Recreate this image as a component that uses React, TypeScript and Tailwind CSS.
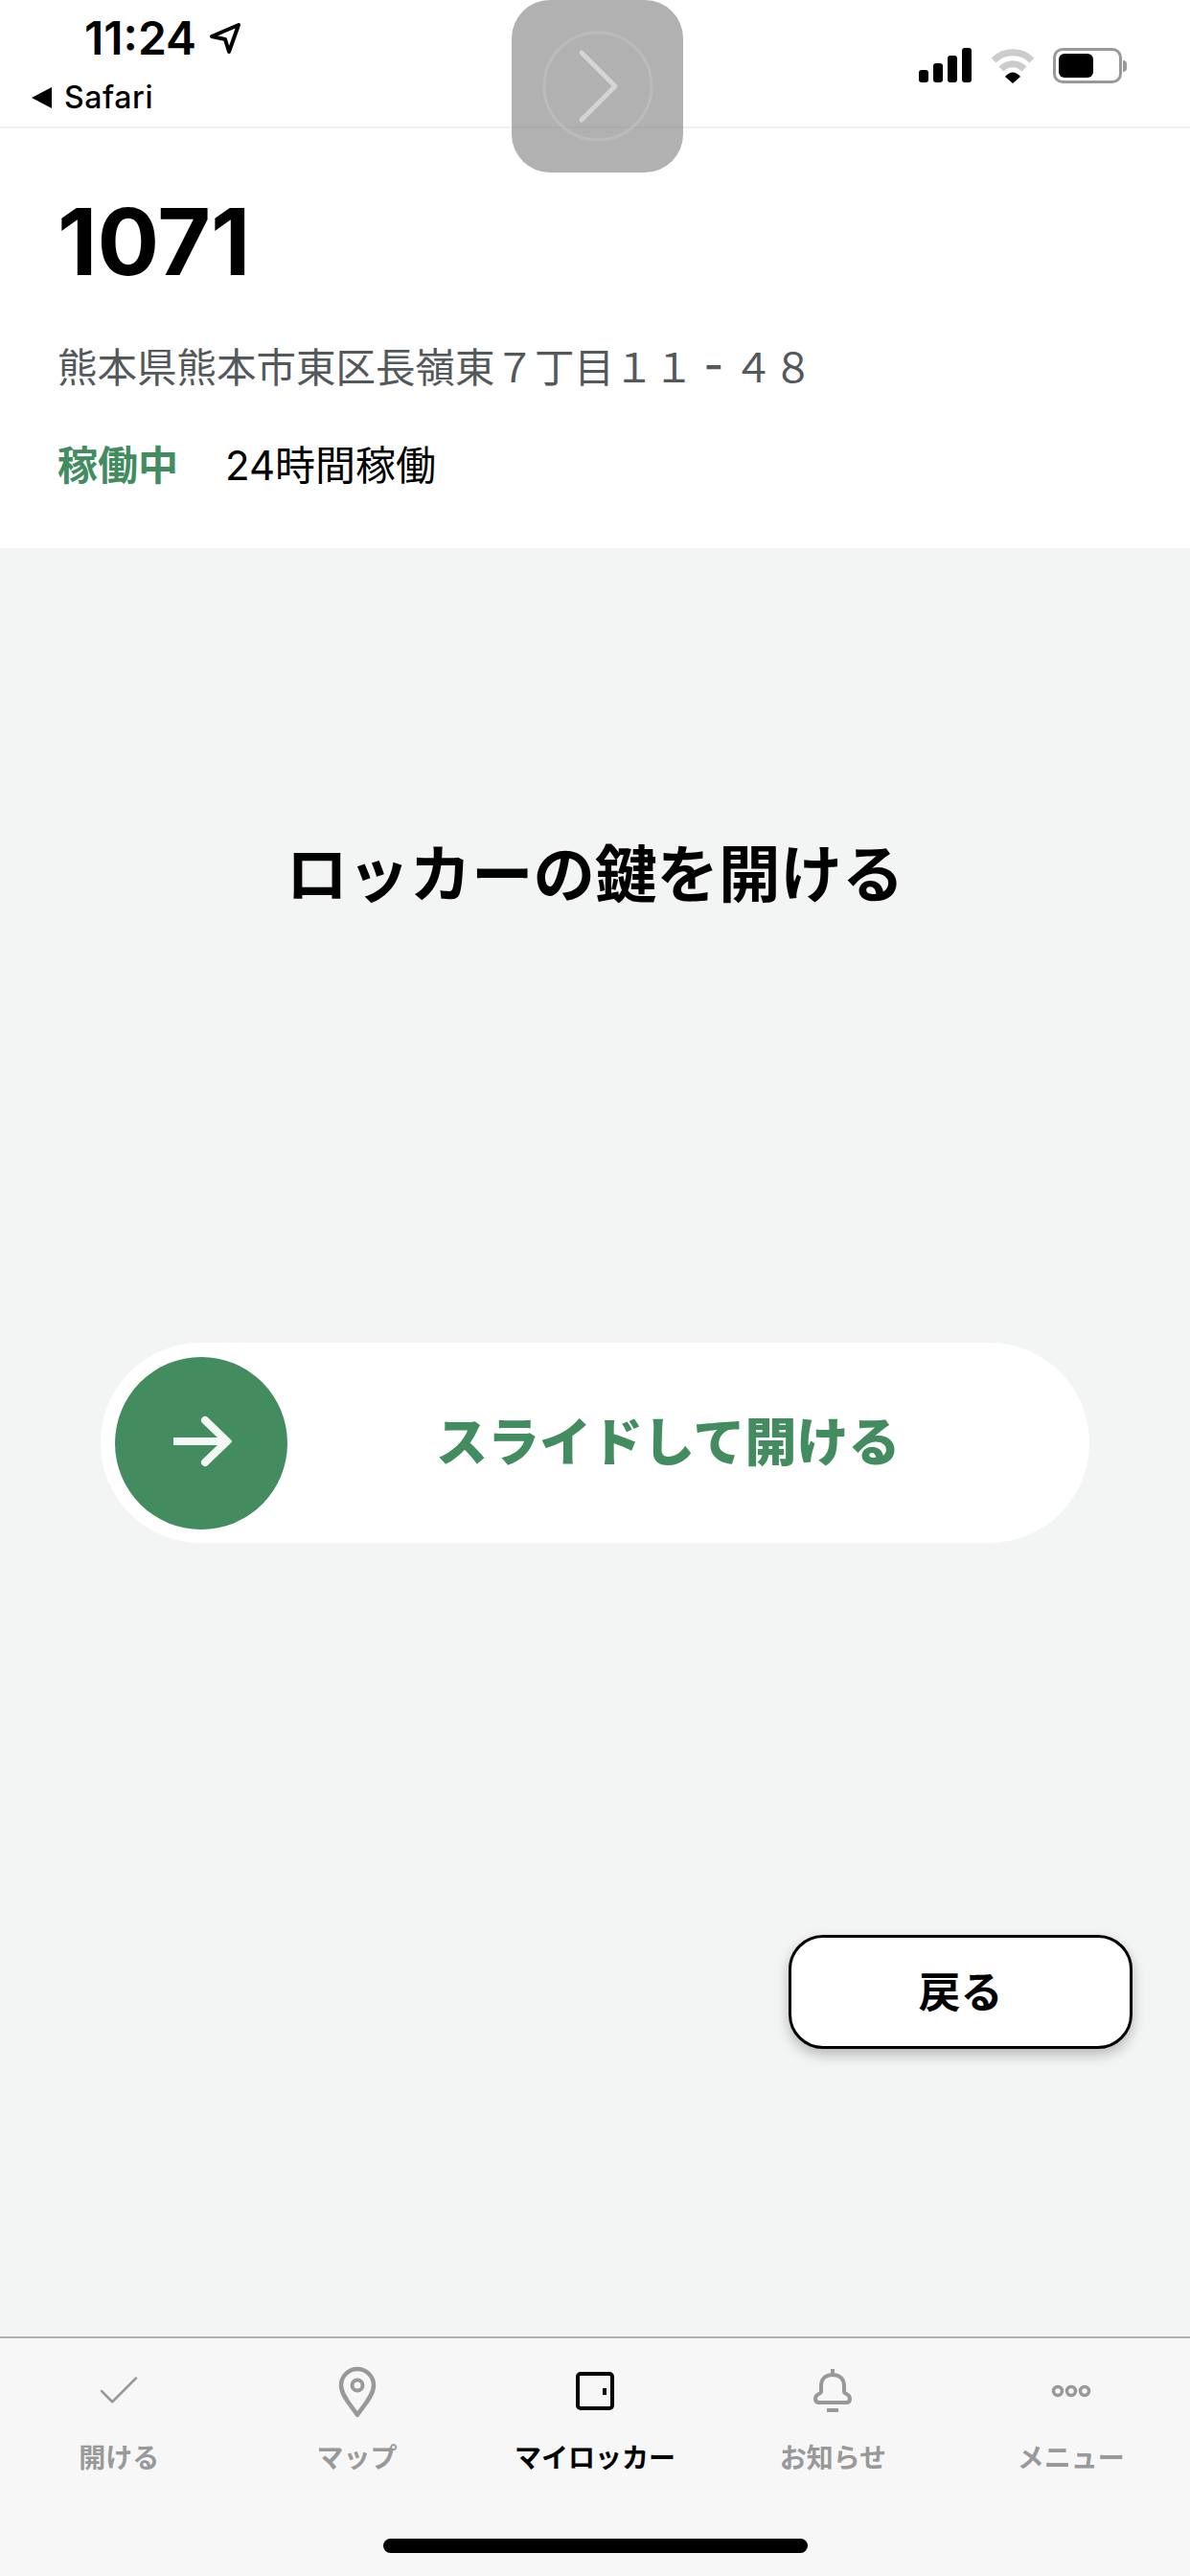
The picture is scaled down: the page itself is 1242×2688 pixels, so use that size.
import { Check } from 'lucide-react';

const jp = 'font-["Inter","Noto_Sans_CJK_JP",sans-serif]';

function TabItem({ label, active, children }: { label: string; active?: boolean; children: React.ReactNode }) {
  return (
    <div className={`flex flex-col items-center ${active ? 'text-black' : 'text-[#999999]'}`}>
      <div className="h-[60px] flex items-center justify-center">{children}</div>
      <span className="mt-[22px] text-[28px] leading-[36px] font-bold whitespace-nowrap">{label}</span>
    </div>
  );
}

export default function App() {
  return (
    <div className={`relative w-[1242px] h-[2688px] flex flex-col bg-[#f3f5f4] overflow-hidden ${jp}`}>
      {/* Status bar */}
      <div className="h-[134px] bg-white border-b-2 border-[#f0f0f4] flex justify-between">
        <div className="pl-[33px]">
          <div className="pl-[55px] pt-[18px] flex items-center gap-[13px] h-[62px]">
            <span className="text-[48px] leading-[54px] font-semibold text-black">11:24</span>
            <svg width="34" height="34" viewBox="0 0 34 34" fill="none">
              <path d="M31 3 L3 15 L17 18 L21 31 Z" stroke="#000" strokeWidth="4" strokeLinejoin="round" />
            </svg>
          </div>
          <div className="flex items-center gap-[12px] mt-[20px]">
            <svg width="22" height="22" viewBox="0 0 22 22">
              <path d="M21 0 V22 L0 11 Z" fill="#000" />
            </svg>
            <span className="text-[32px] leading-[40px] font-medium tracking-[0.6px] text-black">Safari</span>
          </div>
        </div>
        <div className="pr-[66px] pt-[50px] flex items-start gap-[18px]">
          <svg width="56" height="36" viewBox="0 0 56 36" fill="#000">
            <rect x="0" y="23" width="10" height="13" rx="3" />
            <rect x="15" y="16" width="10" height="20" rx="3" />
            <rect x="30" y="8" width="10" height="28" rx="3" />
            <rect x="45" y="0" width="10" height="36" rx="3" />
          </svg>
          <svg width="48" height="38" viewBox="0 0 48 38" fill="none" className="-mt-[1px]">
            <path d="M4 14 C15 3 33 3 44 14" stroke="#cccccc" strokeWidth="7" />
            <path d="M12 23 C19 16 29 16 36 23" stroke="#cccccc" strokeWidth="7" />
            <path d="M16 31 C21 25 27 25 32 31 L24 38 Z" fill="#000" />
          </svg>
          <div className="flex items-center">
            <div className="w-[72px] h-[37px] border-[3px] border-[#999999] rounded-[10px] p-[3px] bg-white">
              <div className="w-[36px] h-full bg-black rounded-[6px]" />
            </div>
            <div className="w-[4px] h-[12px] bg-[#999999] rounded-r-[4px] ml-[1px]" />
          </div>
        </div>
      </div>

      {/* Locker info */}
      <div className="h-[438px] bg-white pl-[60px] pt-[60px]">
        <h1 className="text-[96px] leading-[116px] font-bold text-black">1071</h1>
        <p className="mt-[44px] text-[41.5px] leading-[60px] font-normal text-[#53585b] whitespace-nowrap">
          熊本県熊本市東区長嶺東７丁目１１
          <span className="inline-block scale-x-[0.5] font-bold">－</span>
          ４８
        </p>
        <div className="mt-[42px] flex items-center text-[42px] leading-[60px]">
          <span className="font-bold text-[#428c5f]">稼働中</span>
          <span className="ml-[49px] text-black">24時間稼働</span>
        </div>
      </div>

      {/* Unlock area */}
      <div className="flex-1 flex flex-col">
        <h2 className="mt-[294px] text-center text-[64.5px] leading-[94px] font-bold text-black">
          ロッカーの鍵を開ける
        </h2>
        <div className="mt-[441px] ml-[105px] w-[1032px] h-[209px] rounded-full bg-white flex items-center pl-[15px]">
          <div className="w-[180px] h-[180px] rounded-full bg-[#428c5f] flex items-center justify-center shrink-0">
            <svg width="64" height="60" viewBox="0 0 64 60" fill="none" stroke="#f4f8f5" strokeWidth="8" className="-mt-[4px] blur-[0.5px]">
              <path d="M3 30 H58" />
              <path d="M36 8 L59 30 L36 52" strokeLinecap="round" />
            </svg>
          </div>
          <span className="ml-[155px] text-[54px] leading-[76px] font-extrabold text-[#428c5f] whitespace-nowrap">
            スライドして開ける
          </span>
        </div>
        <div className="mt-[409px] mr-[60px] flex justify-end">
          <button className="w-[359px] h-[119px] rounded-[36px] border-[3px] border-black bg-white shadow-[0_6px_14px_rgba(0,0,0,0.25)] text-[44px] font-bold text-black">
            戻る
          </button>
        </div>
      </div>

      {/* Tab bar */}
      <div className="h-[250px] bg-[#f7f7f7] border-t-2 border-[#b0b0b0] flex flex-col">
        <div className="grid grid-cols-5 pt-[25px]">
          <TabItem label="開ける">
            <Check size={54} strokeWidth={1.1} className="text-[#999999]" />
          </TabItem>
          <TabItem label="マップ">
            <svg width="40" height="55" viewBox="0 0 40 55" fill="none" stroke="#999999" strokeWidth="4.5">
              <path d="M20 52 C17 46 3 33 3 21 A17 17 0 0 1 37 21 C37 33 23 46 20 52 Z" strokeLinejoin="round" />
              <circle cx="20" cy="21" r="5.5" strokeWidth="4" />
            </svg>
          </TabItem>
          <TabItem label="マイロッカー" active>
            <svg width="40" height="40" viewBox="0 0 40 40" fill="none">
              <rect x="2" y="2" width="36" height="36" rx="3" stroke="#000" strokeWidth="4" />
              <rect x="28" y="17" width="4" height="7" fill="#000" />
            </svg>
          </TabItem>
          <TabItem label="お知らせ">
            <svg width="40" height="46" viewBox="0 0 40 46" fill="none" stroke="#999999" strokeWidth="4">
              <path d="M20 0 V6" />
              <path d="M8 24 V18 C8 10 13 6 20 6 C27 6 32 10 32 18 V24 C32 26 38 26 38 31 C38 34 36 35 34 35 H6 C4 35 2 34 2 31 C2 26 8 26 8 24 Z" />
              <path d="M14 43 H26" />
            </svg>
          </TabItem>
          <TabItem label="メニュー">
            <svg width="42" height="14" viewBox="0 0 42 14" fill="none" stroke="#999999" strokeWidth="3.5">
              <circle cx="7" cy="7" r="4.5" />
              <circle cx="21" cy="7" r="4.5" />
              <circle cx="35" cy="7" r="4.5" />
            </svg>
          </TabItem>
        </div>
        <div className="mt-auto mb-[24px] mx-auto w-[443px] h-[15px] rounded-full bg-black" />
      </div>

      {/* Reachability / gesture overlay */}
      <div className="absolute left-[534px] top-0 w-[179px] h-[180px] rounded-[40px] bg-[rgba(140,140,140,0.68)] flex items-center justify-center">
        <svg width="116" height="116" viewBox="0 0 116 116" fill="none">
          <circle cx="58" cy="58" r="56" stroke="rgba(255,255,255,0.13)" strokeWidth="3" />
          <path d="M41 23 L76 58 L41 93" stroke="rgba(255,255,255,0.45)" strokeWidth="5" strokeLinecap="round" strokeLinejoin="round" />
        </svg>
      </div>
    </div>
  );
}
